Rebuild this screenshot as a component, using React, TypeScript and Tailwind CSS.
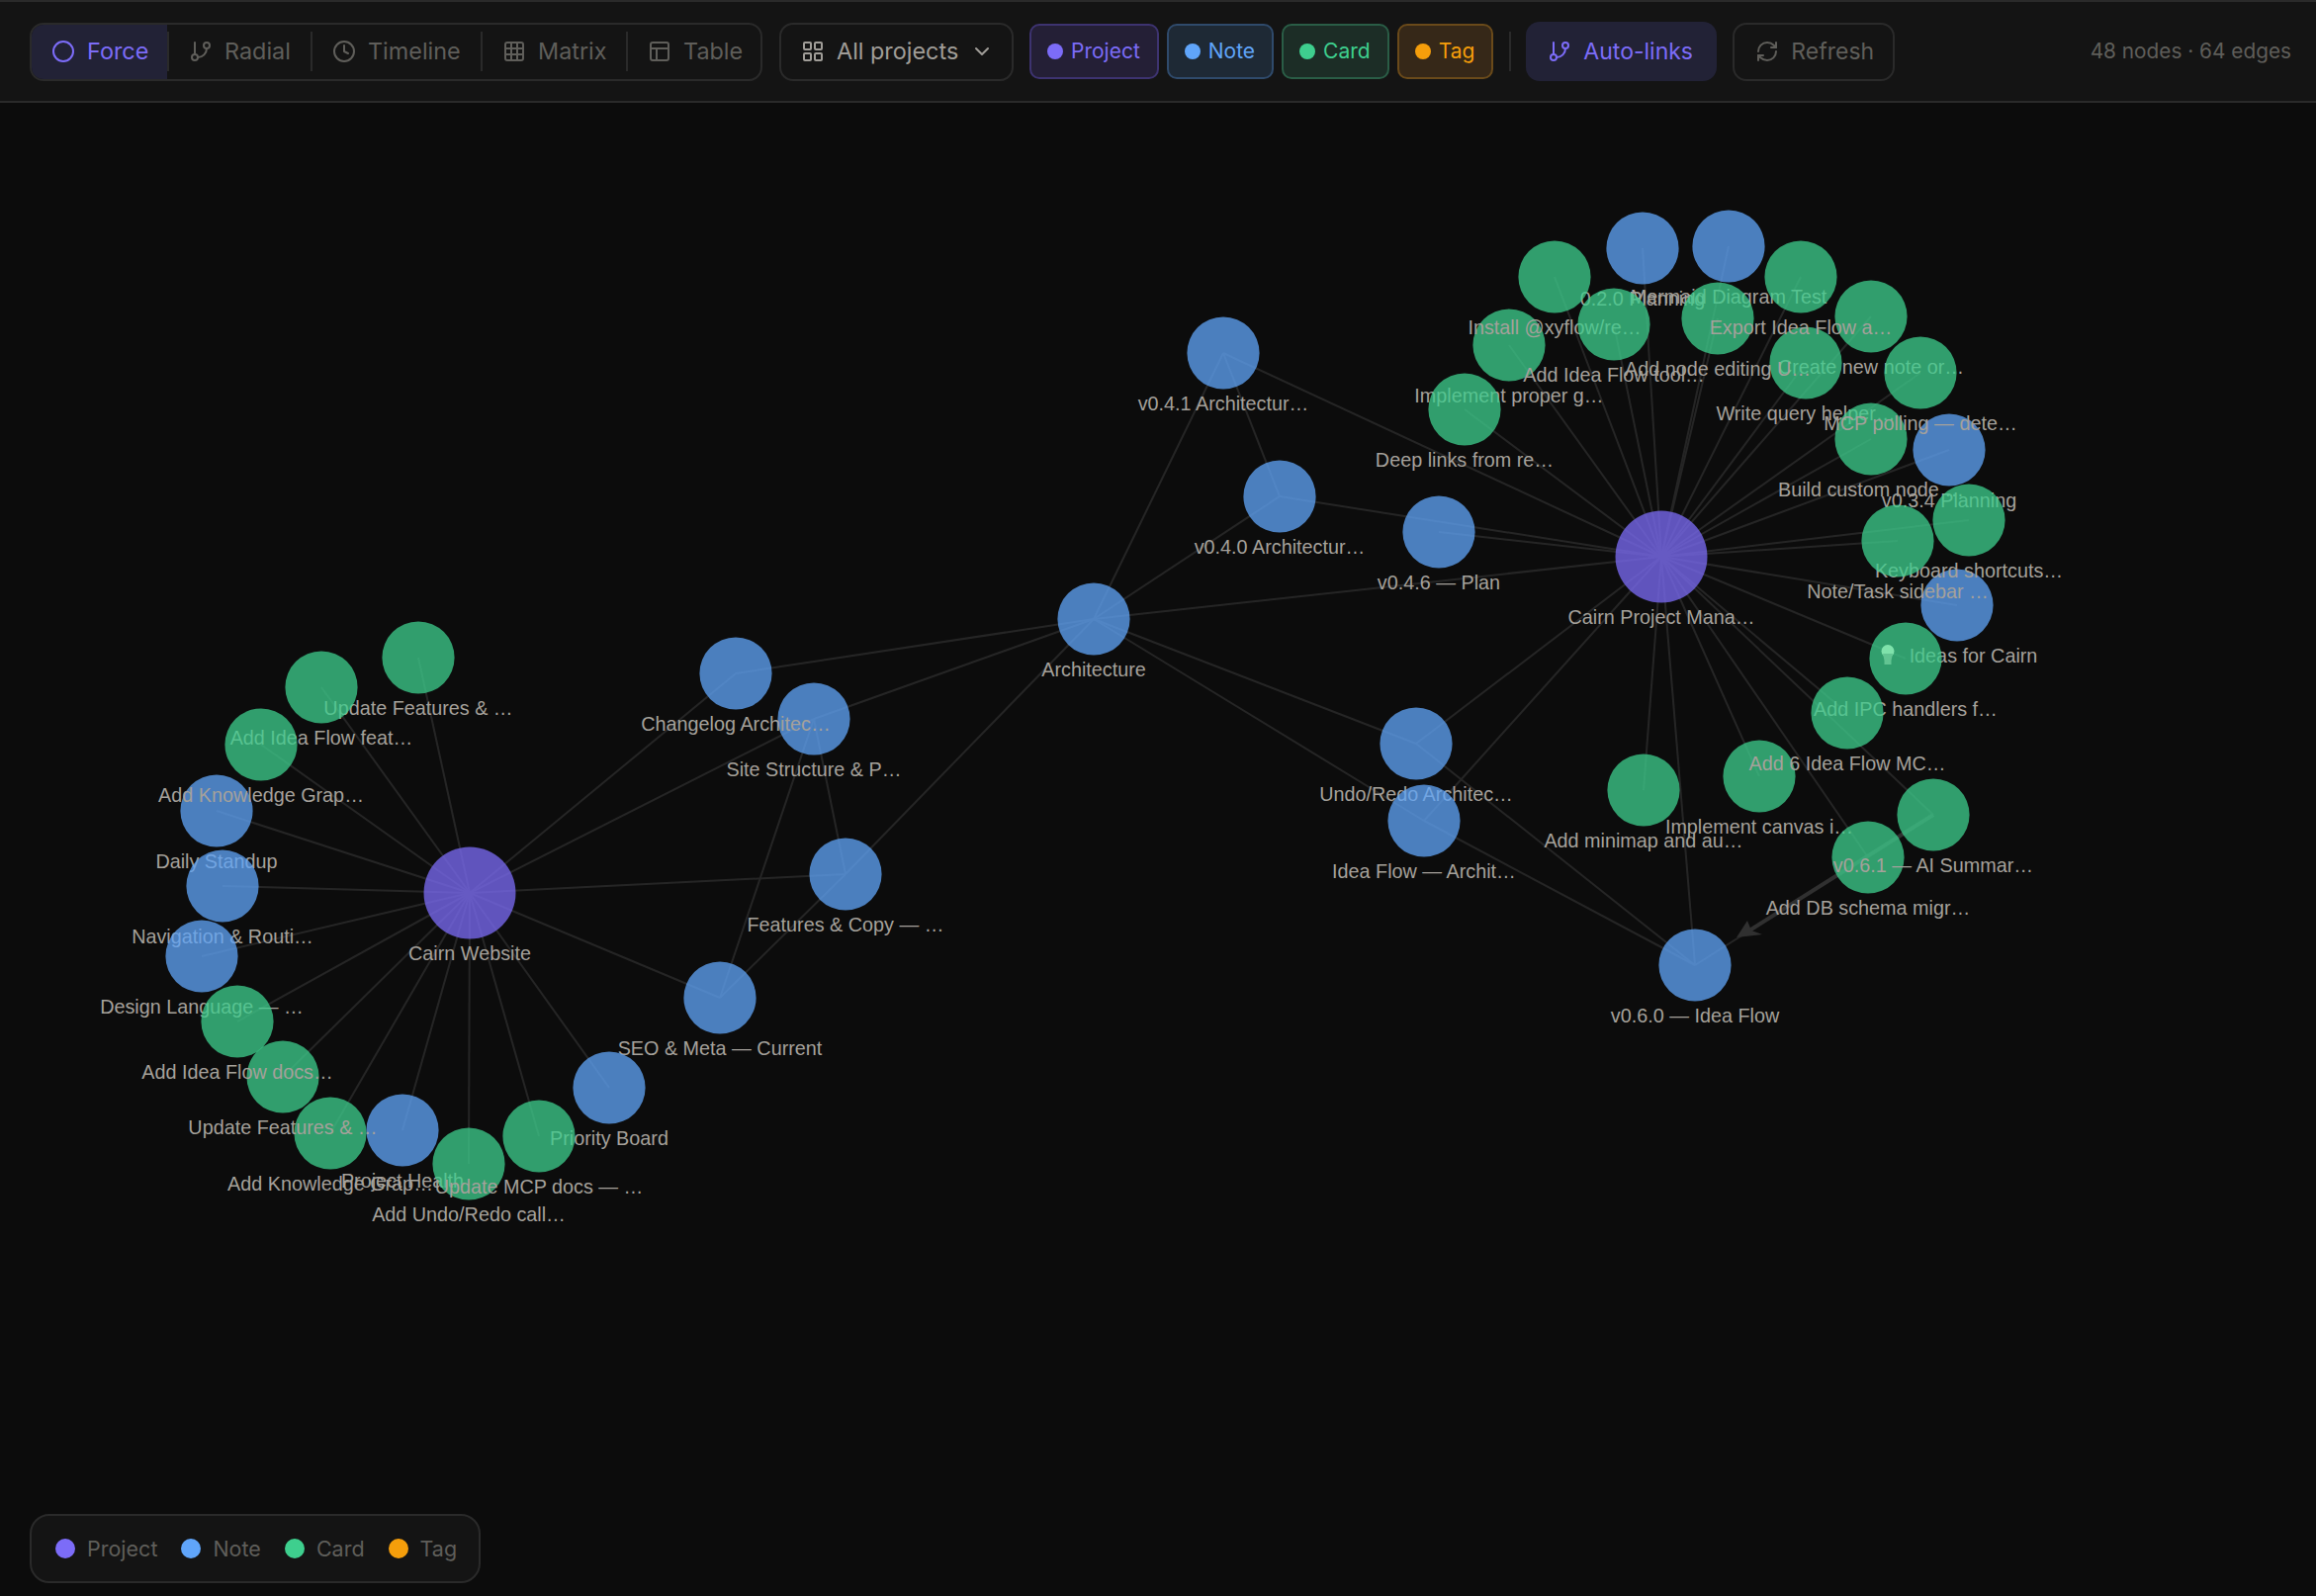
import { ChevronDown, Circle, Clock, GitBranch, Grid3x3, LayoutGrid, PanelsTopLeft, RefreshCw } from "lucide-react";

type Kind = "project" | "note" | "card";

const fills: Record<Kind, string> = {
  project: "fill-[#7c6cf8]",
  note: "fill-[#60a5fa]",
  card: "fill-[#3ecf8e]",
};

// x, y, kind, label - order is paint order, later circles dim earlier labels
const nodes: [number, number, Kind, string][] = [
  [1680, 563, "project", "Cairn Project Mana…"],
  [475, 903, "project", "Cairn Website"],
  [1106, 626, "note", "Architecture"],
  [1237, 357, "note", "v0.4.1 Architectur…"],
  [1294, 502, "note", "v0.4.0 Architectur…"],
  [1455, 538, "note", "v0.4.6 — Plan"],
  [1432, 752, "note", "Undo/Redo Architec…"],
  [1440, 830, "note", "Idea Flow — Archit…"],
  [1714, 976, "note", "v0.6.0 — Idea Flow"],
  [1661, 251, "note", "0.2.0 Planning"],
  [1748, 249, "note", "Mermaid Diagram Test"],
  [1971, 455, "note", "v0.3.4 Planning"],
  [1979, 612, "note", "Ideas for Cairn"],
  [823, 727, "note", "Site Structure & P…"],
  [744, 681, "note", "Changelog Architec…"],
  [855, 884, "note", "Features & Copy — …"],
  [728, 1009, "note", "SEO & Meta — Current"],
  [616, 1100, "note", "Priority Board"],
  [407, 1143, "note", "Project Health"],
  [219, 820, "note", "Daily Standup"],
  [225, 896, "note", "Navigation & Routi…"],
  [204, 967, "note", "Design Language — …"],
  [1526, 349, "card", "Implement proper g…"],
  [1481, 414, "card", "Deep links from re…"],
  [1572, 280, "card", "Install @xyflow/re…"],
  [1632, 328, "card", "Add Idea Flow tool…"],
  [1892, 320, "card", "Create new note or…"],
  [1826, 367, "card", "Write query helper…"],
  [1737, 322, "card", "Add node editing U…"],
  [1821, 280, "card", "Export Idea Flow a…"],
  [1892, 444, "card", "Build custom node …"],
  [1942, 377, "card", "MCP polling — dete…"],
  [1991, 526, "card", "Keyboard shortcuts…"],
  [1919, 547, "card", "Note/Task sidebar …"],
  [1927, 666, "card", "Add IPC handlers f…"],
  [1779, 785, "card", "Implement canvas i…"],
  [1868, 721, "card", "Add 6 Idea Flow MC…"],
  [1662, 799, "card", "Add minimap and au…"],
  [1889, 867, "card", "Add DB schema migr…"],
  [1955, 824, "card", "v0.6.1 — AI Summar…"],
  [423, 665, "card", "Update Features & …"],
  [325, 695, "card", "Add Idea Flow feat…"],
  [264, 753, "card", "Add Knowledge Grap…"],
  [334, 1146, "card", "Add Knowledge Grap…"],
  [286, 1089, "card", "Update Features & …"],
  [240, 1033, "card", "Add Idea Flow docs…"],
  [474, 1177, "card", "Add Undo/Redo call…"],
  [545, 1149, "card", "Update MCP docs — …"],
];

const rightHub = [1680, 563];
const leftHub = [475, 903];
const arch = [1106, 626];
const v060 = [1714, 976];
const v061 = [1955, 824];
const undo = [1432, 752];
const ideaFlow = [1440, 830];
const site = [823, 727];
const features = [855, 884];
const seo = [728, 1009];
const v041 = [1237, 357];
const v040 = [1294, 502];
const changelog = [744, 681];

const rightSpokes = [
  [1661, 251], [1748, 249], [1572, 280], [1821, 280], [1892, 320], [1632, 328], [1737, 322], [1526, 349],
  [1826, 367], [1942, 377], [1481, 414], [1892, 444], [1971, 455], [1991, 526], [1919, 547], [1455, 538],
  [1979, 612], [1927, 666], [1868, 721], [1779, 785], [1662, 799], v061, [1889, 867], undo, ideaFlow,
  v060, v041, v040, arch,
];

const leftSpokes = [
  [423, 665], [325, 695], [264, 753], [219, 820], [225, 896], [204, 967], [240, 1033], [286, 1089], [334, 1146],
  [407, 1143], [474, 1177], [545, 1149], [616, 1100], changelog, site, features, seo,
];

const edges: number[][][] = [
  ...rightSpokes.map((p) => [rightHub, p]),
  ...leftSpokes.map((p) => [leftHub, p]),
  [arch, changelog],
  [arch, site],
  [arch, features],
  [arch, undo],
  [arch, ideaFlow],
  [arch, v041],
  [arch, v040],
  [v041, v040],
  [undo, v060],
  [ideaFlow, v060],
  [v061, v060],
  [site, features],
  [site, seo],
  [features, seo],
];

const tabs = [
  { label: "Radial", Icon: GitBranch, width: "w-[143px]" },
  { label: "Timeline", Icon: Clock, width: "w-[170px]" },
  { label: "Matrix", Icon: Grid3x3, width: "w-[145px]" },
  { label: "Table", Icon: PanelsTopLeft, width: "w-[133px]" },
];

const chips = [
  { label: "Project", box: "bg-[#241f36] border-[#3d3370] text-[#7c6cf8]", dot: "bg-[#7c6cf8]" },
  { label: "Note", box: "bg-[#1e2935] border-[#2f4a6b] text-[#60a5fa]", dot: "bg-[#60a5fa]" },
  { label: "Card", box: "bg-[#1c2d26] border-[#2a5d46] text-[#3ecf8e]", dot: "bg-[#3ecf8e]" },
  { label: "Tag", box: "bg-[#362818] border-[#6a4a1a] text-[#f59e0b]", dot: "bg-[#f59e0b]" },
];

const legend = [
  { label: "Project", dot: "bg-[#7c6cf8]" },
  { label: "Note", dot: "bg-[#60a5fa]" },
  { label: "Card", dot: "bg-[#3ecf8e]" },
  { label: "Tag", dot: "bg-[#f59e0b]" },
];

function Toolbar() {
  return (
    <header className="h-[104px] shrink-0 flex items-center pl-[30px] pr-[25px] bg-[#141414] border-t-2 border-b-2 border-[#2a2a2a] text-[23.4px] text-[#5f5e5a]">
      <div className="h-[59px] w-[741px] shrink-0 flex items-center rounded-[14px] border-2 border-[#2a2a2a] overflow-hidden">
        <button className="h-full w-[137px] shrink-0 flex items-center gap-[12px] pl-[20px] bg-[#222236] text-[#7c6cf8]">
          <Circle size={24} strokeWidth={2} />
          Force
        </button>
        {tabs.map(({ label, Icon, width }) => (
          <div key={label} className="contents">
            <div className="w-[2px] h-[40px] shrink-0 bg-[#2a2a2a]" />
            <button className={`h-full shrink-0 flex items-center gap-[12px] pl-[20px] ${width}`}>
              <Icon size={24} strokeWidth={2} />
              {label}
            </button>
          </div>
        ))}
      </div>
      <button className="ml-[17px] h-[59px] w-[237px] shrink-0 flex items-center gap-[12px] pl-[20px] rounded-[14px] border-2 border-[#2a2a2a] text-[#a09d98]">
        <LayoutGrid size={24} strokeWidth={2} />
        All projects
        <ChevronDown size={24} strokeWidth={2} />
      </button>
      <div className="ml-[16px] flex items-center gap-[8px] text-[21px]">
        {chips.map((c) => (
          <div key={c.label} className={`h-[56px] flex items-center gap-[8px] pl-[16px] pr-[17px] rounded-[10px] border-2 ${c.box}`}>
            <span className={`w-[16px] h-[16px] rounded-full ${c.dot}`} />
            {c.label}
          </div>
        ))}
      </div>
      <div className="ml-[16px] w-[2px] h-[40px] bg-[#2a2a2a]" />
      <button className="ml-[15px] h-[60px] w-[193px] shrink-0 flex items-center gap-[12px] pl-[22px] rounded-[14px] bg-[#222236] text-[#7c6cf8] text-[23px]">
        <GitBranch size={24} strokeWidth={2} />
        Auto-links
      </button>
      <button className="ml-[16px] h-[59px] w-[164px] shrink-0 flex items-center gap-[12px] pl-[21px] rounded-[14px] border-2 border-[#2a2a2a] text-[23px]">
        <RefreshCw size={24} strokeWidth={2} />
        Refresh
      </button>
      <span className="ml-auto text-[20.8px]">48 nodes · 64 edges</span>
    </header>
  );
}

function Graph() {
  return (
    <svg width={2342} height={1510} viewBox="0 104 2342 1510" className="block">
      <g className="stroke-white stroke-2 opacity-[0.1]">
        {edges.map(([a, b], i) => (
          <line key={i} x1={a[0]} y1={a[1]} x2={b[0]} y2={b[1]} />
        ))}
      </g>
      {/* the one directed edge */}
      <line x1={1955} y1={824} x2={1766} y2={943} className="stroke-[#303030] stroke-[4px]" />
      <path d="M1756 948 L1782 945 L1771 941 L1767 931 Z" className="fill-[#303030]" />
      {nodes.map(([x, y, kind, label], i) => {
        const r = kind === "project" ? 46.5 : 36.6;
        const isIdeas = label === "Ideas for Cairn";
        return (
          <g key={i}>
            <circle cx={x} cy={y} r={r} className={`${fills[kind]} opacity-75`} />
            <text
              x={isIdeas ? 1995.5 : x}
              y={y + r + 21}
              textAnchor="middle"
              className="fill-[#a5a19b] text-[19.8px] font-['Liberation_Sans',sans-serif]"
            >
              {label}
            </text>
          </g>
        );
      })}
      <circle cx={1909} cy={658.5} r={6.5} className="fill-[#7fe2ab]" />
      <path d="M1904 661 H1914 L1912.5 668 V672 H1905.5 V668 Z" className="fill-[#62c492]" />
    </svg>
  );
}

export default function App() {
  return (
    <div className="relative w-[2342px] h-[1614px] overflow-hidden flex flex-col bg-[#0c0c0c] font-['Inter',sans-serif]">
      <Toolbar />
      <Graph />
      <div className="absolute left-[30px] top-[1531px] h-[70px] flex items-center gap-[24px] pl-[24px] pr-[22px] rounded-[20px] border-2 border-[#2a2a2a] bg-[#141414] text-[21.5px] text-[#5f5e5a]">
        {legend.map((l) => (
          <div key={l.label} className="flex items-center gap-[12px]">
            <span className={`w-[20px] h-[20px] rounded-full ${l.dot}`} />
            {l.label}
          </div>
        ))}
      </div>
    </div>
  );
}
